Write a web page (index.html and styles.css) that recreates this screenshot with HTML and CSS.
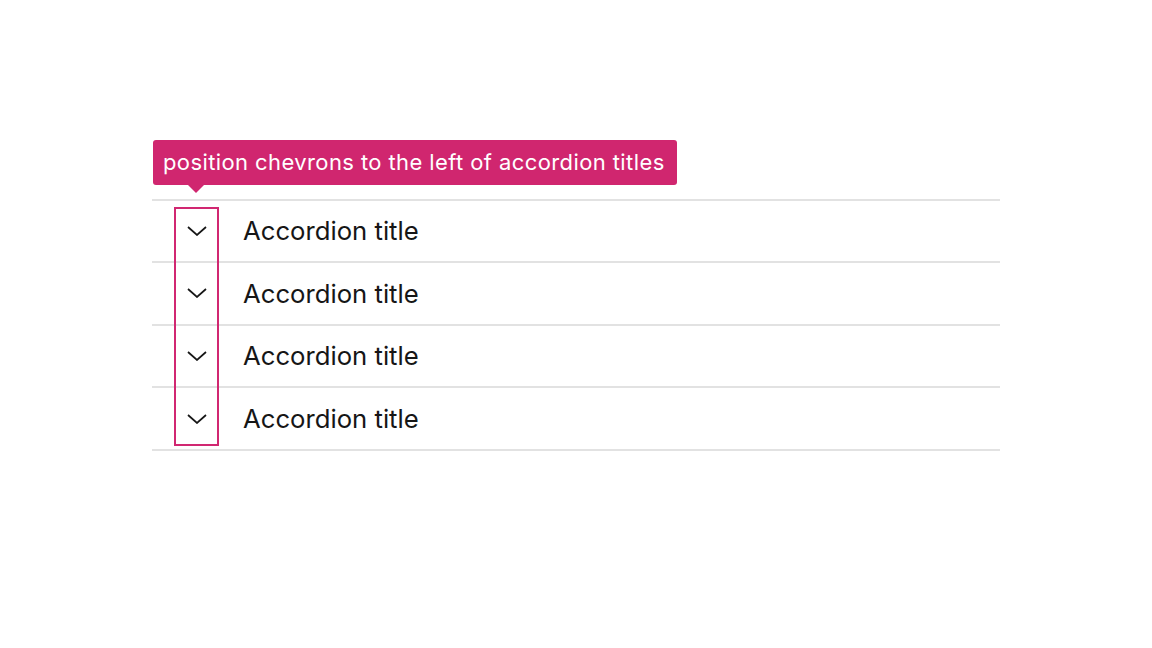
FILE: index.html
```html
<!DOCTYPE html>
<html lang="en">
<head>
<meta charset="utf-8">
<title>Accordion annotation</title>
<link rel="stylesheet" href="styles.css">
</head>
<body>
<div class="stage">
  <div class="tooltip">position chevrons to the left of accordion titles</div>
  <div class="accordion">
    <div class="highlight"></div>
    <div class="row">
      <svg class="chev" viewBox="0 0 20 10" width="20" height="10"><path d="M1 1 L10 9 L19 1" fill="none" stroke="#161616" stroke-width="1.7"/></svg>
      <span class="title">Accordion title</span>
    </div>
    <div class="row">
      <svg class="chev" viewBox="0 0 20 10" width="20" height="10"><path d="M1 1 L10 9 L19 1" fill="none" stroke="#161616" stroke-width="1.7"/></svg>
      <span class="title">Accordion title</span>
    </div>
    <div class="row">
      <svg class="chev" viewBox="0 0 20 10" width="20" height="10"><path d="M1 1 L10 9 L19 1" fill="none" stroke="#161616" stroke-width="1.7"/></svg>
      <span class="title">Accordion title</span>
    </div>
    <div class="row">
      <svg class="chev" viewBox="0 0 20 10" width="20" height="10"><path d="M1 1 L10 9 L19 1" fill="none" stroke="#161616" stroke-width="1.7"/></svg>
      <span class="title">Accordion title</span>
    </div>
  </div>
</div>
</body>
</html>
```

FILE: styles.css
```css
html, body {
  margin: 0;
  padding: 0;
  background: #ffffff;
}
body {
  width: 1152px;
  height: 648px;
  overflow: hidden;
  font-family: Inter, "Noto Sans", "Liberation Sans", sans-serif;
}
.stage {
  padding-top: 140px;
  padding-left: 152px;
  width: 848px;
}
.tooltip {
  position: relative;
  display: block;
  width: max-content;
  margin-left: 1px;
  height: 45px;
  line-height: 45px;
  padding: 0 12px 0 10px;
  background: #d0266f;
  color: #ffffff;
  border-radius: 3px;
  font-size: 22px;
  letter-spacing: 0.4px;
  white-space: nowrap;
}
.tooltip::after {
  content: "";
  position: absolute;
  left: 35px;
  top: 45px;
  border-left: 8px solid transparent;
  border-right: 8px solid transparent;
  border-top: 8px solid #d0266f;
}
.accordion {
  position: relative;
  margin-top: 13.5px;
  border-bottom: 2px solid #e2e2e2;
}
.row {
  height: 60.6px;
  border-top: 2px solid #e2e2e2;
  display: flex;
  align-items: center;
  padding-left: 34.5px;
}
.chev {
  flex: none;
  display: block;
}
.title {
  margin-left: 36.5px;
  font-size: 25.7px;
  color: #161616;
}
.highlight {
  position: absolute;
  left: 22px;
  top: 8px;
  width: 41px;
  height: 235px;
  border: 2px solid #d12771;
  pointer-events: none;
}
```
